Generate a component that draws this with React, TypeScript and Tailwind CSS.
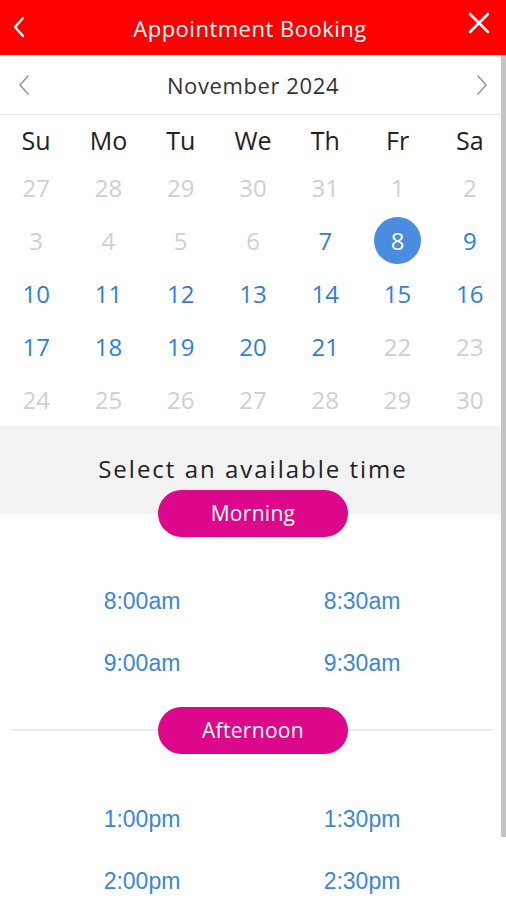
import React from "react";

const OPEN = { fontFamily: '"Open Sans", "Noto Sans", sans-serif' };
const ARIAL = { fontFamily: '"Liberation Sans", Arial, sans-serif' };

type Day = { n: number; state: "off" | "on" | "sel" };

const rows: Day[][] = [
  [27, 28, 29, 30, 31, 1, 2].map((n) => ({ n, state: "off" as const })),
  [
    { n: 3, state: "off" },
    { n: 4, state: "off" },
    { n: 5, state: "off" },
    { n: 6, state: "off" },
    { n: 7, state: "on" },
    { n: 8, state: "sel" },
    { n: 9, state: "on" },
  ],
  [10, 11, 12, 13, 14, 15, 16].map((n) => ({ n, state: "on" as const })),
  [
    { n: 17, state: "on" },
    { n: 18, state: "on" },
    { n: 19, state: "on" },
    { n: 20, state: "on" },
    { n: 21, state: "on" },
    { n: 22, state: "off" },
    { n: 23, state: "off" },
  ],
  [24, 25, 26, 27, 28, 29, 30].map((n) => ({ n, state: "off" as const })),
];

const days = ["Su", "Mo", "Tu", "We", "Th", "Fr", "Sa"];

function Pill({ label }: { label: string }) {
  return (
    <div
      className="w-[190px] h-[47px] rounded-full bg-[#dc078a] text-white text-[21px] tracking-[0.3px] flex items-center justify-center"
      style={OPEN}
    >
      {label}
    </div>
  );
}

function TimeGrid({ times }: { times: string[] }) {
  return (
    <div className="mx-[32px] w-[440px] grid grid-cols-2">
      {times.map((t) => (
        <div
          key={t}
          className="h-[62px] flex items-center justify-center text-[23px] text-[#3b86d8]"
          style={ARIAL}
        >
          {t}
        </div>
      ))}
    </div>
  );
}

export default function App() {
  return (
    <div className="relative w-[506px] h-[900px] overflow-hidden bg-white" style={OPEN}>
      {/* Header */}
      <div className="h-[55px] bg-[#ff0000] flex items-center justify-between px-[12px] text-white">
        <svg width="14" height="22" viewBox="0 0 14 22" fill="none" className="mt-[-2px]">
          <path d="M11 2 L3 11 L11 20" stroke="white" strokeWidth="2.4" strokeLinecap="round" strokeLinejoin="round" />
        </svg>
        <div className="text-[22px] leading-none tracking-[0.5px] ml-[6px]" style={OPEN}>
          Appointment Booking
        </div>
        <svg width="22" height="22" viewBox="0 0 22 22" fill="none" className="mr-[4px] mt-[-10px]">
          <path d="M2 2 L20 20 M20 2 L2 20" stroke="white" strokeWidth="2.6" strokeLinecap="round" />
        </svg>
      </div>

      {/* Month nav */}
      <div className="h-[60px] flex items-center justify-between px-[17px] border-b border-[#e6e6e6]">
        <svg width="14" height="22" viewBox="0 0 14 22" fill="none">
          <path d="M11 2 L3 11 L11 20" stroke="#9a9a9a" strokeWidth="1.6" strokeLinecap="round" strokeLinejoin="round" />
        </svg>
        <div className="text-[22px] text-[#333] leading-none tracking-[0.6px]">November 2024</div>
        <svg width="14" height="22" viewBox="0 0 14 22" fill="none">
          <path d="M3 2 L11 11 L3 20" stroke="#9a9a9a" strokeWidth="1.6" strokeLinecap="round" strokeLinejoin="round" />
        </svg>
      </div>

      {/* Weekdays */}
      <div className="grid grid-cols-7 h-[46px]">
        {days.map((d) => (
          <div key={d} className="flex items-center justify-center pt-[4px] text-[25px] text-[#222] leading-none">
            {d}
          </div>
        ))}
      </div>

      {/* Dates */}
      {rows.map((r, i) => (
        <div key={i} className="grid grid-cols-7 h-[53px]">
          {r.map((d, j) => (
            <div key={j} className="flex items-center justify-center">
              {d.state === "sel" ? (
                <div className="w-[47px] h-[47px] rounded-full bg-[#4a8ce0] text-white text-[24px] flex items-center justify-center leading-none">
                  {d.n}
                </div>
              ) : (
                <span
                  className={
                    "text-[24px] leading-none " +
                    (d.state === "on" ? "text-[#2f7fd6]" : "text-[#cfcfcf]")
                  }
                >
                  {d.n}
                </span>
              )}
            </div>
          ))}
        </div>
      ))}

      {/* Select time */}
      <div className="h-[88px] bg-[#f2f2f2] flex items-start justify-center pt-[28px]">
        <div className="text-[24px] text-[#222] tracking-[2px] leading-[30px]">
          Select an available time
        </div>
      </div>
      <div className="flex justify-center mt-[-24px]">
        <Pill label="Morning" />
      </div>
      <div className="h-[33px]" />
      <TimeGrid times={["8:00am", "8:30am", "9:00am", "9:30am"]} />

      <div className="relative mt-[13px] h-[47px] flex items-center justify-center">
        <div className="absolute left-[11px] right-[13px] top-[22px] h-[2px] bg-[#ececec]" />
        <div className="relative">
          <Pill label="Afternoon" />
        </div>
      </div>
      <div className="h-[34px]" />
      <TimeGrid times={["1:00pm", "1:30pm", "2:00pm", "2:30pm"]} />

      {/* Scrollbar */}
      <div className="absolute right-0 top-[55px] w-[5px] h-[782px] bg-[#c4c4c4]" />
    </div>
  );
}
